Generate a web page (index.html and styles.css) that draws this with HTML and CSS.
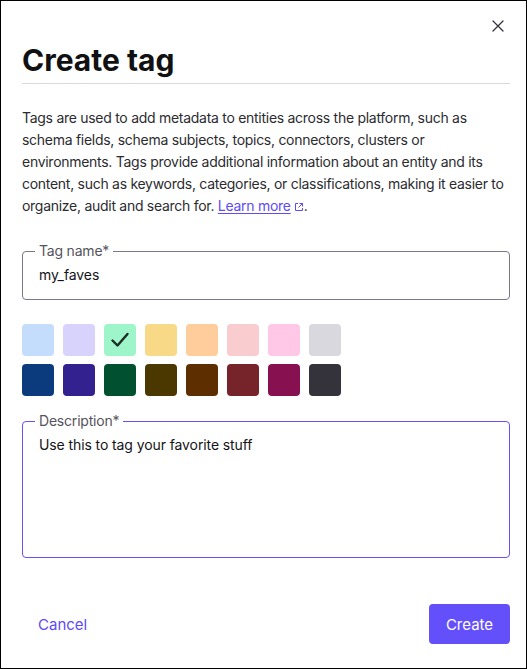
FILE: index.html
```html
<!DOCTYPE html>
<html lang="en">
<head>
<meta charset="utf-8">
<title>Create tag</title>
<link rel="stylesheet" href="styles.css">
</head>
<body>
<div class="dialog">
  <div class="close-row">
    <button class="close" aria-label="Close">
      <svg width="12" height="12" viewBox="0 0 12 12"><path d="M1 1L11 11M11 1L1 11" stroke="#34323b" stroke-width="1.3" stroke-linecap="round"/></svg>
    </button>
  </div>
  <h1 class="title">Create tag</h1>
  <p class="intro">Tags are used to add metadata to entities across the platform, such as schema fields, schema subjects, topics, connectors, clusters or environments. Tags provide additional information about an entity and its content, such as keywords, categories, or classifications, making it easier to organize, audit and search for. <a class="link" href="#">Learn more</a><svg class="ext" width="10" height="10" viewBox="0 0 10 10"><path d="M4 1.5H1.5V8.5H8.5V6" fill="none" stroke="#5e4bf5" stroke-width="1"/><path d="M5.5 1.5H8.5V4.5M8.5 1.5L4.5 5.5" fill="none" stroke="#5e4bf5" stroke-width="1"/></svg>.</p>

  <div class="field name-field">
    <span class="label">Tag name*</span>
    <div class="value">my_faves</div>
  </div>

  <div class="swatches">
    <span class="sw" style="background:#c5ddfc"></span>
    <span class="sw" style="background:#d8d3fc"></span>
    <span class="sw selected" style="background:#9ef5c9"><svg width="20" height="20" viewBox="0 0 20 20"><path d="M2.5 10.5L7.5 15.5L17.5 4" fill="none" stroke="#1c2b25" stroke-width="2.4" stroke-linecap="round" stroke-linejoin="round"/></svg></span>
    <span class="sw" style="background:#f8d987"></span>
    <span class="sw" style="background:#fecd9b"></span>
    <span class="sw" style="background:#f9cdcf"></span>
    <span class="sw" style="background:#fec8e6"></span>
    <span class="sw" style="background:#d9d8de"></span>
    <span class="sw" style="background:#0b3b7c"></span>
    <span class="sw" style="background:#332190"></span>
    <span class="sw" style="background:#015030"></span>
    <span class="sw" style="background:#4a3800"></span>
    <span class="sw" style="background:#5c2e00"></span>
    <span class="sw" style="background:#762329"></span>
    <span class="sw" style="background:#861050"></span>
    <span class="sw" style="background:#34323b"></span>
  </div>

  <div class="field desc-field">
    <span class="label">Description*</span>
    <div class="value">Use this to tag your favorite stuff</div>
  </div>

  <div class="footer">
    <button class="cancel">Cancel</button>
    <button class="create">Create</button>
  </div>
</div>
</body>
</html>
```
FILE: styles.css
```css
* { box-sizing: border-box; }
html, body { margin: 0; padding: 0; }
body {
  width: 527px;
  height: 669px;
  border: 1px solid #000;
  background: #fff;
  font-family: Inter, "Noto Sans", sans-serif;
  color: #2c2c30;
  overflow: hidden;
}
.dialog {
  display: flex;
  flex-direction: column;
  padding: 0 16px 0 21px;
}
.close-row {
  display: flex;
  justify-content: flex-end;
  margin-top: 13px;
  height: 24px;
}
.close {
  width: 24px;
  height: 24px;
  border: 0;
  background: none;
  padding: 0;
  display: flex;
  align-items: center;
  justify-content: center;
  cursor: pointer;
}
.title {
  margin: 4px 0 0;
  font-size: 30px;
  line-height: 36px;
  font-weight: 700;
  color: #111114;
  padding-bottom: 5px;
  border-bottom: 1px solid #d9d9dc;
}
.intro {
  margin: 23px 0 0;
  font-size: 14px;
  line-height: 22px;
  letter-spacing: -0.28px;
  color: #2c2c30;
}
.link {
  color: #5e4bf5;
  text-decoration: underline;
  text-underline-offset: 2px;
}
.ext { margin-left: 3px; vertical-align: -1px; }
.field {
  position: relative;
  border: 1px solid #7b778a;
  border-radius: 4px;
  padding: 13px 16px;
}
.name-field {
  margin-top: 34px;
  height: 49px;
}
.desc-field {
  margin-top: 25px;
  height: 137px;
  border-color: #6651f9;
}
.label {
  position: absolute;
  top: -10px;
  left: 12px;
  padding: 0 4px;
  background: #fff;
  font-size: 14px;
  line-height: 18px;
  letter-spacing: -0.2px;
  color: #55535c;
}
.value {
  font-size: 14px;
  line-height: 20px;
  font-weight: 400;
  letter-spacing: -0.1px;
  color: #141418;
}
.swatches {
  margin-top: 24px;
  display: grid;
  grid-template-columns: repeat(8, 32px);
  column-gap: 9px;
  row-gap: 8px;
}
.sw {
  width: 32px;
  height: 32px;
  border-radius: 4px;
  display: flex;
  align-items: center;
  justify-content: center;
}
.footer {
  margin-top: 46px;
  display: flex;
  justify-content: space-between;
  align-items: center;
}
.cancel {
  border: 0;
  background: none;
  font-family: inherit;
  font-size: 15px;
  color: #5e4bf5;
  padding: 0 16px;
  height: 40px;
}
.create {
  border: 0;
  background: #6450fa;
  color: #fff;
  font-family: inherit;
  font-size: 15px;
  border-radius: 4px;
  height: 40px;
  width: 81px;
  padding: 0;
}
```
